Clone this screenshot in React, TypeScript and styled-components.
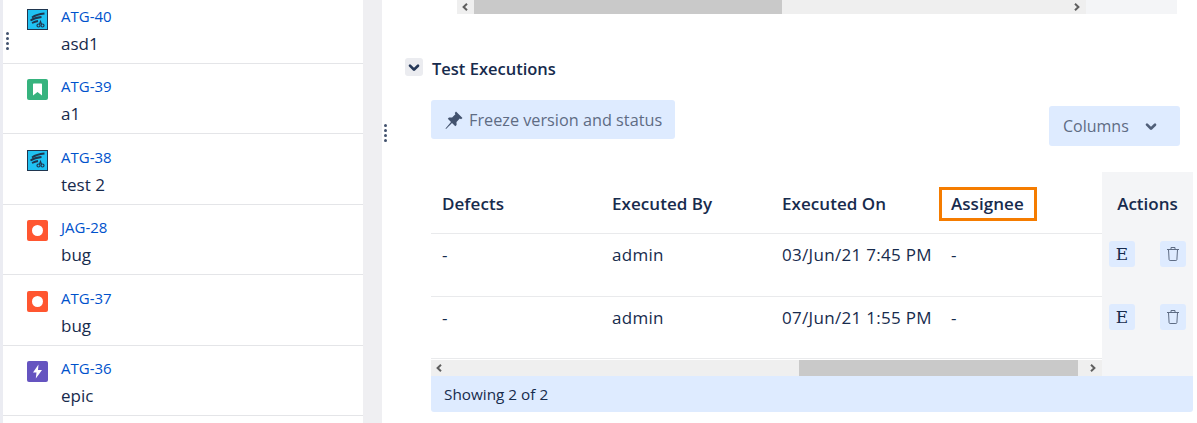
import styled, { createGlobalStyle } from 'styled-components';

const GlobalStyle = createGlobalStyle`
  html, body {
    margin: 0;
    height: 423px;
    overflow: hidden;
    background: #fff;
    font-family: "Open Sans", "Noto Sans", sans-serif;
    color: #172b4d;
  }
`;

const Page = styled.div`
  display: flex;
  width: 1197px;
  height: 423px;
  overflow: hidden;
`;

const Sidebar = styled.aside`
  position: relative;
  width: 360px;
  border-left: 3px solid #ebecf2;
  flex: none;
`;

const IssueList = styled.ul`
  list-style: none;
  margin: -6.4px 0 0;
  padding: 0;
`;

const IssueRow = styled.li`
  box-sizing: border-box;
  height: 70.4px;
  display: grid;
  grid-template-columns: 21px 1fr;
  column-gap: 13px;
  padding: 15.4px 0 0 24px;
  border-bottom: 1px solid #e4e5e8;
`;

const IconTile = styled.span<{ $bg: string; $outlined?: boolean }>`
  display: flex;
  align-items: center;
  justify-content: center;
  box-sizing: border-box;
  width: 21px;
  height: 21px;
  border-radius: ${(p) => (p.$outlined ? 0 : 2)}px;
  border: ${(p) => (p.$outlined ? '1px solid #20364f' : 0)};
  background: ${(p) => p.$bg};
`;

const IssueKey = styled.div`
  font-size: 15px;
  line-height: 20px;
  margin-top: -3px;
  color: #0052cc;
`;

const IssueSummary = styled.div`
  font-size: 17px;
  line-height: 24px;
  margin-top: 6px;
`;

const Grip = styled.div<{ $left: number; $top: number }>`
  position: absolute;
  left: ${(p) => p.$left}px;
  top: ${(p) => p.$top}px;
  display: grid;
  gap: 2px;
  & > i {
    display: block;
    width: 3px;
    height: 3px;
    border-radius: 50%;
    background: #42526e;
  }
`;

const Gutter = styled.div`
  width: 19px;
  flex: none;
  background: #efeff2;
`;

const Main = styled.main`
  position: relative;
  flex: 1;
  min-width: 0;
`;

const TopScroll = styled.div`
  display: flex;
  height: 15px;
  margin: 0 20px 0 75px;
`;

const ScrollTrack = styled.div`
  flex: 1;
  display: flex;
  align-items: center;
  height: 14px;
  background: #efefef;
  color: #5f5f5f;
`;

const ScrollThumb = styled.div<{ $before: number; $width: number }>`
  height: 100%;
  width: ${(p) => p.$width}px;
  margin-left: ${(p) => p.$before}px;
  background: #c9c9c9;
`;

const ScrollArrow = styled.svg<{ $right?: boolean }>`
  flex: none;
  width: 8px;
  height: 8px;
  margin-left: ${(p) => (p.$right ? 'auto' : '4px')};
  margin-right: ${(p) => (p.$right ? '5px' : '-12px')};
`;

const TopCorner = styled.div`
  width: 91px;
  height: 14px;
  background: #f4f5f7;
`;

const SectionHeader = styled.div`
  display: flex;
  align-items: center;
  gap: 9px;
  margin: 43px 0 0 23px;
  height: 18px;
`;

const ToggleButton = styled.span`
  display: flex;
  align-items: center;
  justify-content: center;
  flex: none;
  width: 18px;
  height: 18px;
  border-radius: 3px;
  background: #ebecf0;
  color: #253858;
  overflow: hidden;
`;

const SectionTitle = styled.h2`
  margin: 4px 0 0;
  font-size: 16.5px;
  font-weight: 600;
  line-height: 22px;
`;

const Toolbar = styled.div`
  display: flex;
  justify-content: space-between;
  align-items: flex-start;
  margin: 24px 17px 0 49px;
`;

const ToolButton = styled.button<{ $offset?: number }>`
  display: flex;
  align-items: center;
  border: 0;
  border-radius: 3px;
  background: #deebff;
  color: #5e6c84;
  font: inherit;
  font-size: 16px;
  padding: 0;
  margin-top: ${(p) => p.$offset ?? 0}px;
`;

const FreezeButton = styled(ToolButton)`
  width: 244px;
  height: 39px;
  padding-left: 14px;
  gap: 6px;
  font-size: 16.25px;
  & > svg {
    color: #42526e;
    flex: none;
  }
`;

const ColumnsButton = styled(ToolButton)`
  width: 131px;
  height: 40px;
  padding-left: 14px;
  gap: 6px;
  & > svg {
    color: #505f79;
  }
`;

const TableWrap = styled.div`
  display: flex;
  margin: 26px 4px 0 49px;
`;

const TableBody = styled.div`
  flex: 1;
  min-width: 0;
`;

const Row = styled.div<{ $height: number }>`
  display: grid;
  grid-template-columns: 170px 170px 169px 1fr;
  box-sizing: border-box;
  height: ${(p) => p.$height}px;
  border-bottom: 1px solid #e9eaec;
`;

const HeadCell = styled.div`
  align-self: center;
  padding-left: 11px;
  margin-top: 2px;
  font-size: 17px;
  font-weight: 600;
  letter-spacing: 0.05px;
`;

const HighlightCell = styled(HeadCell)`
  padding-left: 0;
  & > span {
    display: inline-block;
    box-sizing: border-box;
    height: 34px;
    line-height: 28px;
    padding: 0 10px 0 9px;
    margin-left: -1px;
    border: 3px solid #f57c00;
  }
`;

const Cell = styled.div`
  padding: 10px 0 0 11px;
  font-size: 17px;
  line-height: 22px;
  letter-spacing: 0.3px;
`;

const BottomScroll = styled(ScrollTrack)`
  height: 16px;
  margin-top: 1px;
  flex: none;
`;

const ActionsColumn = styled.div`
  width: 91px;
  flex: none;
  background: #f4f5f7;
`;

const ActionsHead = styled.div`
  height: 62px;
  display: flex;
  align-items: center;
  justify-content: center;
  font-size: 17px;
  font-weight: 600;
`;

const ActionsRow = styled.div`
  height: 63px;
  display: flex;
  justify-content: space-between;
  padding: 7px 7px 0;
  box-sizing: border-box;
`;

const ActionButton = styled.span`
  display: flex;
  align-items: center;
  justify-content: center;
  width: 26px;
  height: 26px;
  border-radius: 3px;
  background: #deebff;
  font-family: "DejaVu Serif", serif;
  font-size: 17px;
  color: #172b4d;
`;

const Footer = styled.div`
  box-sizing: border-box;
  height: 36px;
  margin: 0 4px 0 49px;
  padding-left: 13px;
  display: flex;
  align-items: center;
  background: #deebff;
  border-radius: 0 0 3px 3px;
  font-size: 15.3px;
`;

const ChevronSvg = styled.svg`
  flex: none;
  width: 32px;
  height: 32px;
`;

const ChevronDown = () => (
  <ChevronSvg viewBox="0 0 24 24" fill="currentColor">
    <path d="M8.292 10.293a1.009 1.009 0 0 0 0 1.419l2.939 2.965c.218.215.5.322.779.322s.556-.107.769-.322l2.93-2.955a1.01 1.01 0 0 0 0-1.419.987.987 0 0 0-1.406 0l-2.298 2.317-2.307-2.327a.99.99 0 0 0-1.406 0z" />
  </ChevronSvg>
);

const PinIcon = () => (
  <svg width="18" height="18" viewBox="0 0 18 18" fill="currentColor">
    <path d="M11 .5 17.500 7 16 8.200 14.800 7.600 11.500 10.900 11.600 14 10.300 15.200 7 12 1 18 .5 17.500 6 11 2.800 7.700 4 6.400 7.100 6.500 10.400 3.200 9.800 2z" />
  </svg>
);

const ArrowLeft = () => (
  <ScrollArrow viewBox="0 0 8 8" fill="none" stroke="currentColor" strokeWidth="2">
    <path d="M6 0.8 2.6 4 6 7.2" />
  </ScrollArrow>
);

const ArrowRight = () => (
  <ScrollArrow $right viewBox="0 0 8 8" fill="none" stroke="currentColor" strokeWidth="2">
    <path d="M2 0.8 5.4 4 2 7.2" />
  </ScrollArrow>
);

const TrashIcon = () => (
  <svg width="14" height="16" viewBox="0 0 14 16" fill="none" stroke="#5e6c84" strokeWidth="1">
    <path d="M1 3.500h12M5 3.500V1.500h4v2M2.500 3.500l.6 10.200c0 .5.5.8 1 .8h5.800c.5 0 1-.3 1-.8l.6-10.200" />
  </svg>
);

const TaskTile = () => (
  <IconTile $bg="#1fc1f2" $outlined>
    <svg width="17" height="16" viewBox="0 0 17 16" fill="none" stroke="#20364f">
      <path d="M3 5.500C6.500 3 10 2 15.500 1.500" strokeWidth="1.800" />
      <path d="M1.500 8.500C4.500 6.500 8 5.500 12.500 5" strokeWidth="1.800" />
      <path d="M3 11c2-1 4-1.700 6-2" strokeWidth="1.800" />
      <circle cx="9.500" cy="13.500" r="1.500" strokeWidth="1.200" />
      <circle cx="13.500" cy="13.500" r="1.500" strokeWidth="1.200" />
      <path d="M10.500 12.200 11.500 9.500l1 2.700" strokeWidth="1.200" />
    </svg>
  </IconTile>
);

const StoryTile = () => (
  <IconTile $bg="#36b37e">
    <svg width="11" height="13" viewBox="0 0 11 13" fill="#fff">
      <path d="M1 1.500C1 .9 1.400.5 2 .5h7c.6 0 1 .4 1 1v11L5.500 9 1 12.500z" />
    </svg>
  </IconTile>
);

const BugTile = () => (
  <IconTile $bg="#ff5630">
    <svg width="11" height="11" viewBox="0 0 11 11" fill="#fff">
      <circle cx="5.500" cy="5.500" r="5.500" />
    </svg>
  </IconTile>
);

const EpicTile = () => (
  <IconTile $bg="#6554c0">
    <svg width="11" height="15" viewBox="0 0 11 15" fill="#fff">
      <path d="M6.500.5 1 8.500h3.500L3.800 14.500 10 6H6z" />
    </svg>
  </IconTile>
);

const issues = [
  { key: 'ATG-40', summary: 'asd1', icon: <TaskTile /> },
  { key: 'ATG-39', summary: 'a1', icon: <StoryTile /> },
  { key: 'ATG-38', summary: 'test 2', icon: <TaskTile /> },
  { key: 'JAG-28', summary: 'bug', icon: <BugTile /> },
  { key: 'ATG-37', summary: 'bug', icon: <BugTile /> },
  { key: 'ATG-36', summary: 'epic', icon: <EpicTile /> },
];

const executions = [
  { on: '03/Jun/21 7:45 PM', height: 63 },
  { on: '07/Jun/21 1:55 PM', height: 62 },
];

const GripDots = ({ left, top }: { left: number; top: number }) => (
  <Grip $left={left} $top={top}>
    <i />
    <i />
    <i />
    <i />
  </Grip>
);

export default function App() {
  return (
    <Page>
      <GlobalStyle />
      <Sidebar>
        <IssueList>
          {issues.map((issue) => (
            <IssueRow key={issue.key}>
              {issue.icon}
              <div>
                <IssueKey>{issue.key}</IssueKey>
                <IssueSummary>{issue.summary}</IssueSummary>
              </div>
            </IssueRow>
          ))}
        </IssueList>
        <GripDots left={3} top={32} />
      </Sidebar>
      <Gutter />
      <Main>
        <GripDots left={2} top={124} />
        <TopScroll>
          <ScrollTrack>
            <ArrowLeft />
            <ScrollThumb $before={17} $width={308} />
            <ArrowRight />
          </ScrollTrack>
          <TopCorner />
        </TopScroll>
        <SectionHeader>
          <ToggleButton>
            <ChevronDown />
          </ToggleButton>
          <SectionTitle>Test Executions</SectionTitle>
        </SectionHeader>
        <Toolbar>
          <FreezeButton>
            <PinIcon />
            Freeze version and status
          </FreezeButton>
          <ColumnsButton $offset={6}>
            Columns
            <ChevronDown />
          </ColumnsButton>
        </Toolbar>
        <TableWrap>
          <TableBody>
            <Row $height={62}>
              <HeadCell>Defects</HeadCell>
              <HeadCell>Executed By</HeadCell>
              <HeadCell>Executed On</HeadCell>
              <HighlightCell>
                <span>Assignee</span>
              </HighlightCell>
            </Row>
            {executions.map((row) => (
              <Row $height={row.height} key={row.on}>
                <Cell>-</Cell>
                <Cell>admin</Cell>
                <Cell>{row.on}</Cell>
                <Cell>-</Cell>
              </Row>
            ))}
            <BottomScroll>
              <ArrowLeft />
              <ScrollThumb $before={368} $width={279} />
              <ArrowRight />
            </BottomScroll>
          </TableBody>
          <ActionsColumn>
            <ActionsHead>Actions</ActionsHead>
            {executions.map((row) => (
              <ActionsRow key={row.on}>
                <ActionButton>E</ActionButton>
                <ActionButton>
                  <TrashIcon />
                </ActionButton>
              </ActionsRow>
            ))}
          </ActionsColumn>
        </TableWrap>
        <Footer>Showing 2 of 2</Footer>
      </Main>
    </Page>
  );
}
